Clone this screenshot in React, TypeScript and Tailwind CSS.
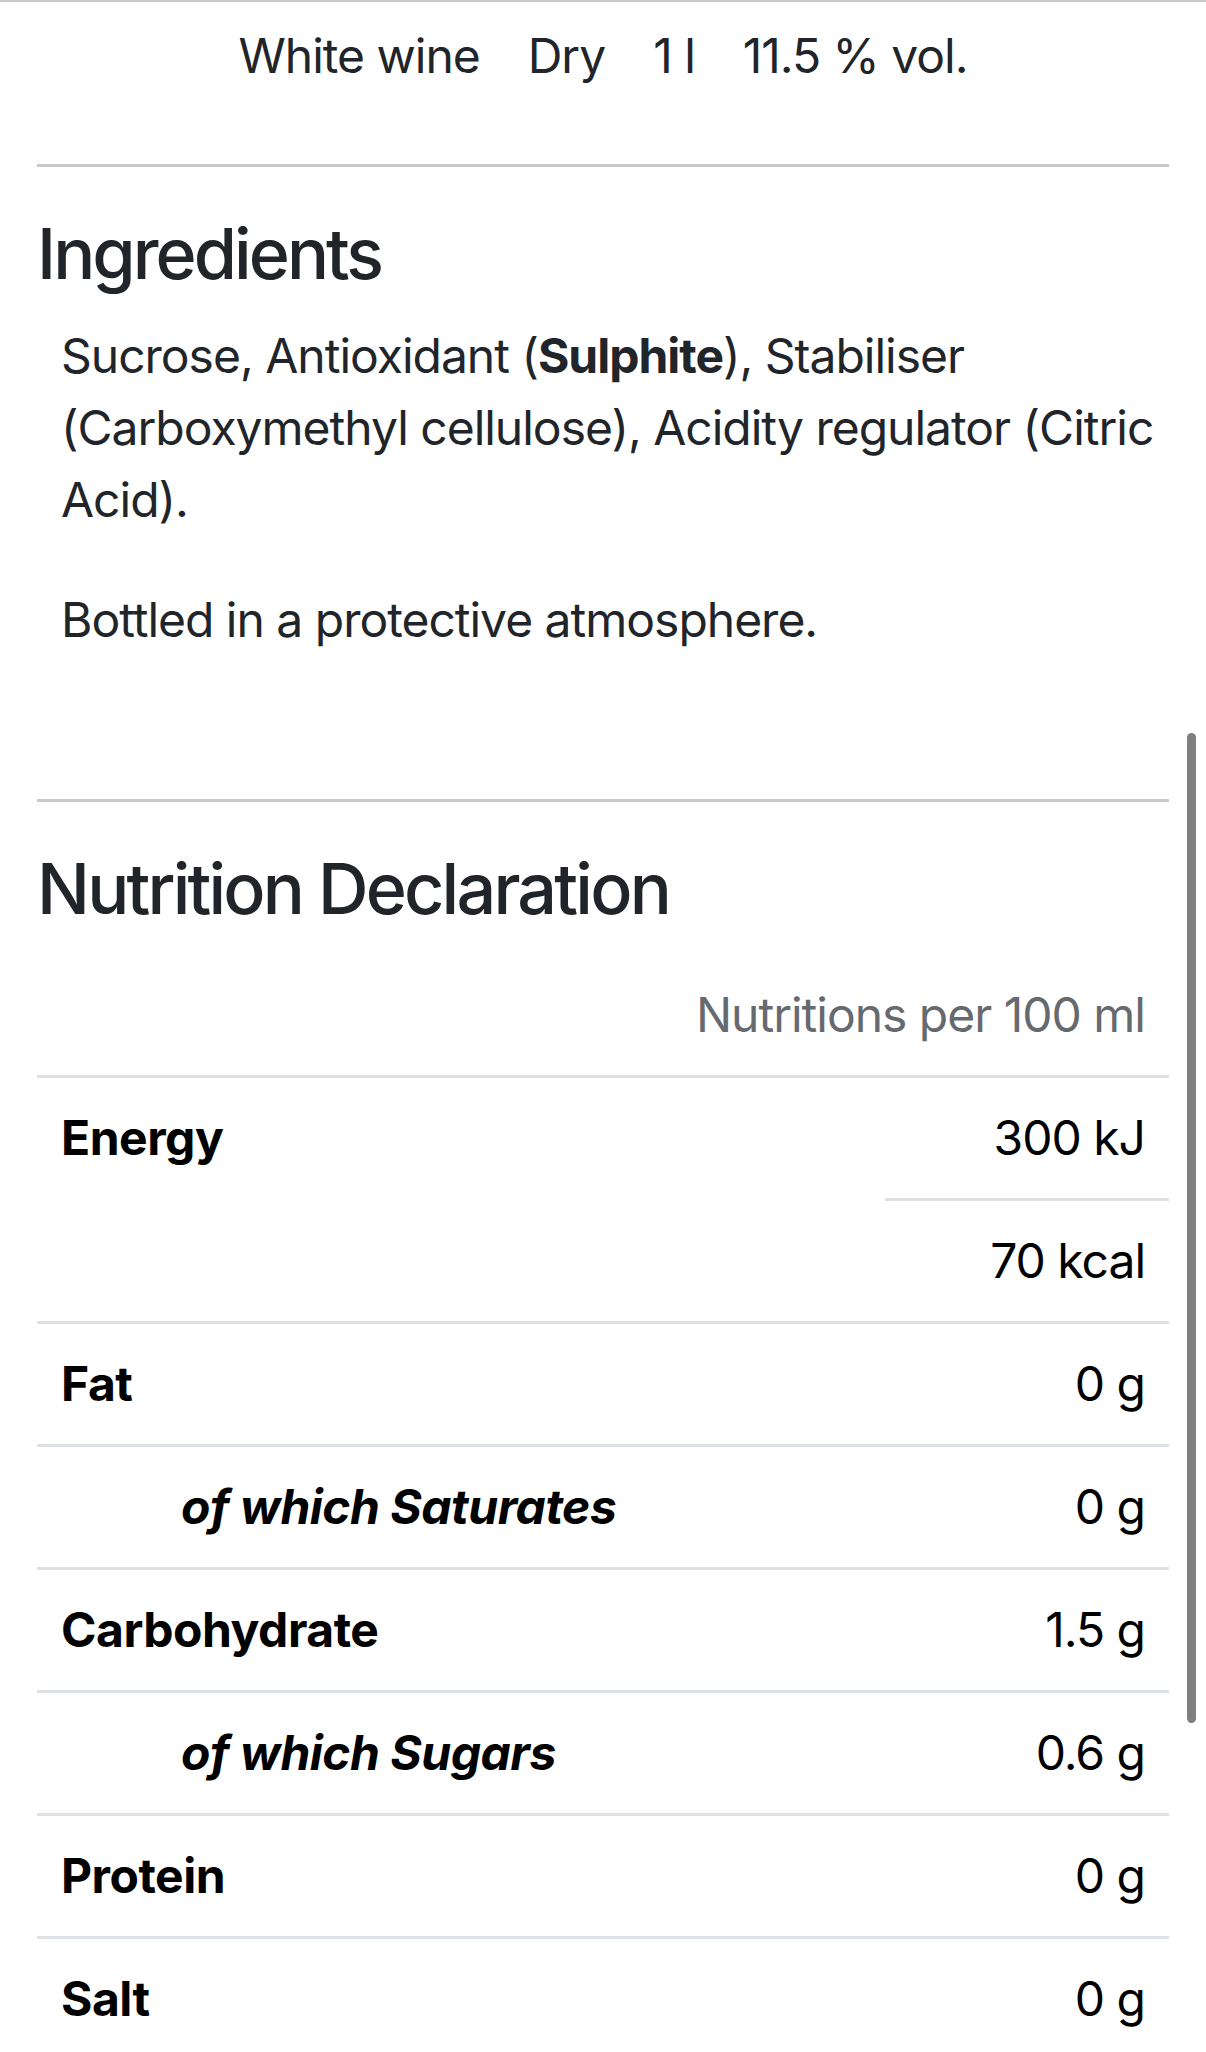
import React from "react"

const tags = ["White wine", "Dry", "1 l", "11.5 % vol."]

type Row = { label?: string; sub?: boolean; values: string[] }

const rows: Row[] = [
  { label: "Energy", values: ["300 kJ", "70 kcal"] },
  { label: "Fat", values: ["0 g"] },
  { label: "of which Saturates", sub: true, values: ["0 g"] },
  { label: "Carbohydrate", values: ["1.5 g"] },
  { label: "of which Sugars", sub: true, values: ["0.6 g"] },
  { label: "Protein", values: ["0 g"] },
  { label: "Salt", values: ["0 g"] },
]

export default function App() {
  return (
    <div className="relative w-[1206px] min-h-[2052px] overflow-hidden bg-white text-[#212529] font-['Inter','Liberation_Sans',sans-serif]">
      <div className="h-[2px] bg-[#c8c9ca]" />

      <div className="flex justify-center gap-[48px] pt-[18px] text-[48px] leading-[72px] tracking-[-0.021em]">
        {tags.map((t) => (
          <span key={t}>{t}</span>
        ))}
      </div>

      <div className="px-[37px]">
        <hr className="mt-[72px] border-0 border-t-[3px] border-[#c8c9ca]" />

        <h3 className="mt-[45px] mb-[24px] text-[70px] leading-[84px] font-medium tracking-[-0.042em]">Ingredients</h3>
        <div className="pl-[24px] text-[48px] leading-[72px] tracking-[-0.021em]">
          <p className="mb-[48px]">
            Sucrose, Antioxidant (<b className="font-bold">Sulphite</b>), Stabiliser (Carboxymethyl cellulose), Acidity
            regulator (Citric Acid).
          </p>
          <p>Bottled in a protective atmosphere.</p>
        </div>

        <hr className="mt-[143px] border-0 border-t-[3px] border-[#c8c9ca]" />

        <h3 className="mt-[45px] mb-[24px] text-[70px] leading-[84px] font-medium tracking-[-0.04em]">
          Nutrition Declaration
        </h3>

        <table className="w-full border-collapse text-[48px] leading-[72px] tracking-[-0.021em] text-black">
          <thead>
            <tr className="border-b-[3px] border-[#dee2e6]">
              <th colSpan={2} className="p-[24px] text-right font-normal text-[#666a6e]">
                Nutritions per 100 ml
              </th>
            </tr>
          </thead>
          <tbody>
            {rows.map((r) =>
              r.values.map((v, i) => (
                <tr key={r.label + v + i}>
                  {i === 0 && (
                    <th
                      rowSpan={r.values.length}
                      className={`border-b-[3px] border-[#dee2e6] py-[24px] pr-[24px] text-left align-top font-bold tracking-[-0.01em] ${
                        r.sub ? "pl-[144px] italic" : "pl-[24px]"
                      }`}
                    >
                      {r.label}
                    </th>
                  )}
                  <td className="w-[284px] border-b-[3px] border-[#dee2e6] p-[24px] text-right">{v}</td>
                </tr>
              ))
            )}
          </tbody>
        </table>
      </div>

      <div className="absolute left-[1187px] top-[733px] h-[990px] w-[9px] rounded-full bg-[#7f7f7f]" />
    </div>
  )
}
